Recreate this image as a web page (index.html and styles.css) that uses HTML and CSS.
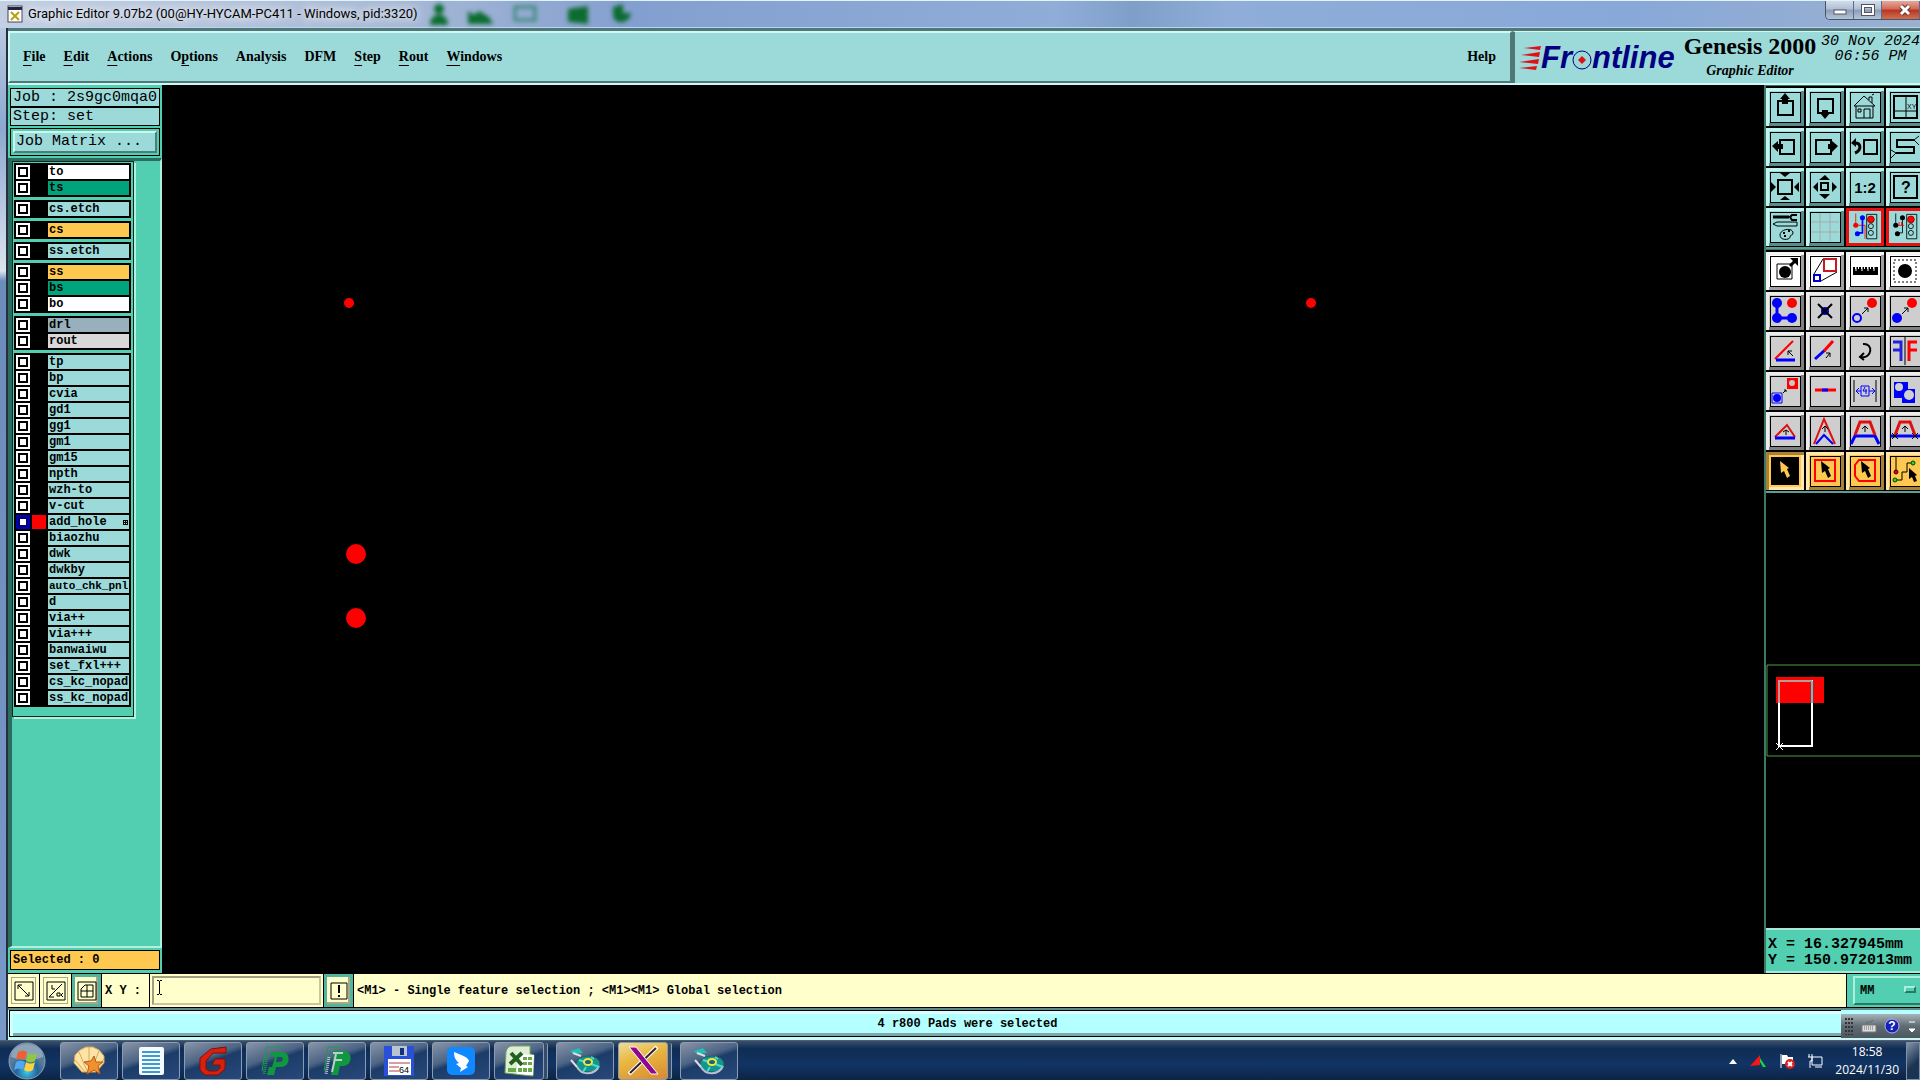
FILE: index.html
```
<!DOCTYPE html>
<html lang="en">
<head>
  <meta charset="UTF-8" />
  <meta name="viewport" content="width=device-width, initial-scale=1.0"/>
  <title>Graphic Editor 9.07b2</title>
  <link rel="stylesheet" href="styles.css">
</head>
<body>
  <!-- Title bar -->
  <div class="titlebar">
    <svg class="app-icon" width="16" height="18" viewBox="0 0 16 18"><rect x="1" y="1" width="14" height="16" fill="#fff" stroke="#445"/><path d="M1 2h14v3H1z" fill="#224"/><path d="M4 7l8 8M12 7l-8 8" stroke="#b8a010" stroke-width="2"/></svg>
    <span class="title">Graphic Editor 9.07b2 (00@HY-HYCAM-PC411 - Windows, pid:3320)</span>
    <svg class="glass" width="230" height="26" viewBox="0 0 230 26"><g fill="#0c6c30"><circle cx="18" cy="8" r="5"/><path d="M9 24c0-14 18-14 18 0zM47 10l6 4 5-4 10 6 4 7H47z"/><path d="M94 6h20v13H94z" fill="none" stroke="#3d8a78" stroke-width="3"/><path d="M147 8l20-3v18l-20-2z"/><path d="M192 6l10-3v9h8c-1 12-18 12-18 2z"/></g></svg>
    <div class="win-buttons">
      <button aria-label="Minimize"><svg width="14" height="12"><rect x="1" y="6" width="12" height="4" fill="#fff" stroke="#556"/></svg></button>
      <button aria-label="Maximize"><svg width="14" height="12"><path d="M2 2h10v8H2z" fill="none" stroke="#556" stroke-width="4"/><path d="M2 2h10v8H2z" fill="none" stroke="#fff" stroke-width="2"/></svg></button>
      <button class="close" aria-label="Close"><svg width="14" height="12"><path d="M3 2l8 8M11 2l-8 8" stroke="#633" stroke-width="5"/><path d="M3 2l8 8M11 2l-8 8" stroke="#fff" stroke-width="3"/></svg></button>
    </div>
  </div>

  <div class="window">
    <div class="edge"></div>
    <div class="main">
      <!-- Menu bar and product banner -->
      <header class="header">
        <nav class="menubar">
          <button><u>F</u>ile</button>
          <button><u>E</u>dit</button>
          <button><u>A</u>ctions</button>
          <button>O<u>p</u>tions</button>
          <button>Analysis</button>
          <button>DFM</button>
          <button><u>S</u>tep</button>
          <button><u>R</u>out</button>
          <button><u>W</u>indows</button>
          <button class="help">Help</button>
        </nav>
        <div class="banner">
          <div class="logo">
            <svg width="22" height="24" viewBox="0 0 22 24"><path d="M4 2L22 0l-1 4zM2 9l19-3-1 5zM0 16l20-3-1 5zM0 22l18-2-1 4z" fill="#e01018"/></svg>
            <span>Fr</span><svg width="20" height="24" viewBox="0 0 20 24"><circle cx="10" cy="14" r="9" fill="none" stroke="#000080" stroke-width="1"/><path d="M10 10l4 4-4 4-4-4z" fill="#e01018"/></svg><span>ntline</span>
          </div>
          <div class="product">
            <div class="product-name">Genesis 2000</div>
            <div class="product-part">Graphic Editor</div>
          </div>
          <div class="datetime"><div>30 Nov 2024</div><div>06:56 PM</div></div>
        </div>
      </header>

      <div class="workspace">
        <!-- Layers panel -->
        <aside class="sidebar">
          <div class="job">
            <div>Job : 2s9gc0mqa0</div>
            <div>Step: set</div>
          </div>
          <div class="matrix"><button>Job Matrix ...</button></div>
          <div class="layers-area">
            <div class="layers">
              <div class="group">
                <label><input type="checkbox"><i></i><span class="white">to</span></label>
                <label><input type="checkbox"><i></i><span class="mask">ts</span></label>
              </div>
              <div class="group">
                <label><input type="checkbox"><i></i><span>cs.etch</span></label>
              </div>
              <div class="group">
                <label><input type="checkbox"><i></i><span class="signal">cs</span></label>
              </div>
              <div class="group">
                <label><input type="checkbox"><i></i><span>ss.etch</span></label>
              </div>
              <div class="group">
                <label><input type="checkbox"><i></i><span class="signal">ss</span></label>
                <label><input type="checkbox"><i></i><span class="mask">bs</span></label>
                <label><input type="checkbox"><i></i><span class="white">bo</span></label>
              </div>
              <div class="group">
                <label><input type="checkbox"><i></i><span class="drill">drl</span></label>
                <label><input type="checkbox"><i></i><span class="rout">rout</span></label>
              </div>
              <div class="group">
                <label><input type="checkbox"><i></i><span>tp</span></label>
                <label><input type="checkbox"><i></i><span>bp</span></label>
                <label><input type="checkbox"><i></i><span>cvia</span></label>
                <label><input type="checkbox"><i></i><span>gd1</span></label>
                <label><input type="checkbox"><i></i><span>gg1</span></label>
                <label><input type="checkbox"><i></i><span>gm1</span></label>
                <label><input type="checkbox"><i></i><span>gm15</span></label>
                <label><input type="checkbox"><i></i><span>npth</span></label>
                <label><input type="checkbox"><i></i><span>wzh-to</span></label>
                <label><input type="checkbox"><i></i><span>v-cut</span></label>
                <label class="active"><input type="checkbox" checked><i></i><span>add_hole<svg width="5" height="5" viewBox="0 0 5 5"><path d="M0 .5h5M0 2.5h5M0 4.5h5M.5 0v5M2.5 0v5M4.5 0v5" stroke="#000"/></svg></span></label>
                <label><input type="checkbox"><i></i><span>biaozhu</span></label>
                <label><input type="checkbox"><i></i><span>dwk</span></label>
                <label><input type="checkbox"><i></i><span>dwkby</span></label>
                <label><input type="checkbox"><i></i><span class="long">auto_chk_pnl</span></label>
                <label><input type="checkbox"><i></i><span>d</span></label>
                <label><input type="checkbox"><i></i><span>via++</span></label>
                <label><input type="checkbox"><i></i><span>via+++</span></label>
                <label><input type="checkbox"><i></i><span>banwaiwu</span></label>
                <label><input type="checkbox"><i></i><span>set_fxl+++</span></label>
                <label><input type="checkbox"><i></i><span>cs_kc_nopad</span></label>
                <label><input type="checkbox"><i></i><span>ss_kc_nopad</span></label>
              </div>
            </div>
          </div>
          <div class="selected">Selected : 0</div>
        </aside>

        <!-- Drawing area -->
        <main class="canvas">
          <svg width="100%" height="100%">
            <g fill="#f00">
              <ellipse cx="187" cy="218" rx="5" ry="5"/>
              <ellipse cx="1149" cy="218" rx="5" ry="5"/>
              <circle cx="194" cy="469" r="10"/>
              <circle cx="194" cy="533" r="10"/>
            </g>
          </svg>
        </main>

        <!-- Tools -->
        <aside class="tools">
          <div class="toolgrid">
            <button aria-label="Pan up"><svg viewBox="0 0 38 38"><path class="f" d="M4 4h30v30H4z"/><path class="k2" d="M12 13h15v14H12z"/><path class="kf" d="M19 5l5 6h-2v5h-6v-5h-2z"/></svg></button>
            <button aria-label="Pan down"><svg viewBox="0 0 38 38"><path class="f" d="M4 4h30v30H4z"/><path class="k2" d="M12 11h15v14H12z"/><path class="kf" d="M19 31l5-6h-2v-3h-6v3h-2z"/></svg></button>
            <button aria-label="Home"><svg viewBox="0 0 38 38"><path class="f" d="M4 4h30v30H4z"/><path class="k" d="M8 18L18 8l11 10zM10 18v12h17V18M18 30v-9h6v9M12 21h3v3h-3zM23 12V9h3v6M26 7l2-1"/></svg></button>
            <button aria-label="Area zoom"><svg viewBox="0 0 38 38"><path class="f" d="M4 4h30v30H4z"/><path class="k2" d="M8 8h23v22H8z"/><path class="k" d="M20 8v22M8 23h23"/><text x="21" y="21" font-size="7">XY</text></svg></button>

            <button aria-label="Pan left"><svg viewBox="0 0 38 38"><path class="f" d="M4 4h30v30H4z"/><path class="k2" d="M14 12h14v14H14z"/><path class="kf" d="M6 18l6-5v3h5v5h-5v3z"/></svg></button>
            <button aria-label="Pan right"><svg viewBox="0 0 38 38"><path class="f" d="M4 4h30v30H4z"/><path class="k2" d="M10 12h15v14H10z"/><path class="kf" d="M32 18l-6-5v3h-4v5h4v3z"/></svg></button>
            <button aria-label="Previous zoom"><svg viewBox="0 0 38 38"><path class="f" d="M4 4h30v30H4z"/><path class="k2" d="M18 12h13v14H18z"/><path d="M9 15c6 0 7 7 0 10" fill="none" stroke="#000" stroke-width="3"/><path class="kf" d="M5 15l5-5v9z"/></svg></button>
            <button aria-label="Snake view"><svg viewBox="0 0 38 38"><path class="f" d="M4 4h30v30H4z"/><path class="k2" d="M28 12H11v7h17v6H10"/><path class="k" d="M28 12l5-4M28 12l5 5M10 25l-5-3M10 25l-5 5"/></svg></button>

            <button aria-label="Zoom in"><svg viewBox="0 0 38 38"><path class="f" d="M4 4h30v30H4z"/><path class="k2" d="M12 12h14v14H12z"/><path class="kf" d="M14 5h10l-5 4zM14 32h10l-5-4zM5 14v10l5-5zM33 14v10l-5-5z"/></svg></button>
            <button aria-label="Zoom out"><svg viewBox="0 0 38 38"><path class="f" d="M4 4h30v30H4z"/><path class="k2" d="M15 15h7v7h-7z"/><path class="kf" d="M13 12h11l-5-5zM13 26h11l-5 5zM12 14v10l-5-5zM26 14v10l5-5z"/></svg></button>
            <button aria-label="Scale one to two"><svg viewBox="0 0 38 38"><path class="f" d="M4 4h30v30H4z"/><text x="19" y="25" font-size="15" font-weight="bold" text-anchor="middle">1:2</text></svg></button>
            <button aria-label="Info"><svg viewBox="0 0 38 38"><path class="f" d="M4 4h30v30H4z"/><path class="k2" d="M8 8h23v22H8z"/><text x="20" y="25" font-size="16" font-weight="bold" text-anchor="middle">?</text></svg></button>

            <button aria-label="Settings"><svg viewBox="0 0 38 38"><path class="f" d="M4 4h30v30H4z"/><path d="M7 9h16" stroke="#000" stroke-width="3"/><path d="M31 7h-5l-2 2 2 3h5" fill="none" stroke="#000" stroke-width="2"/><path class="k" d="M7 16l4-2h20v4H11z"/><path class="k" d="M14 27c0-6 13-8 13-2 0 3-3 1-3 4s-10 4-10-2z"/><path d="M17 25h2M22 23h2M18 28h2" stroke="#000" stroke-width="2"/></svg></button>
            <button aria-label="Grid"><svg viewBox="0 0 38 38"><path class="f" d="M4 4h30v30H4z"/><path d="M14 5v28M24 5v28M5 14h28M5 24h28" stroke="#a8a8a8" fill="none"/></svg></button>
            <button class="alert" aria-label="Snap"><svg viewBox="0 0 38 38"><g id="lamp"><path class="k" d="M21 4h12v29H21z"/><circle cx="26" cy="10" r="4" fill="#f00" stroke="#800"/><circle class="k" cx="26" cy="18" r="3"/><circle class="k" cx="26" cy="26" r="3"/></g><path d="M8 3v14h11v16" fill="none" stroke="#f00"/><circle cx="8" cy="17" r="3" fill="#f00"/><path d="M16 9v17h-6" fill="none" stroke="#00f" stroke-width="2"/><circle cx="16" cy="8" r="3" fill="#00f"/><circle cx="10" cy="27" r="3" fill="#00f"/></svg></button>
            <button class="alert" aria-label="Measure net"><svg viewBox="0 0 38 38"><use href="#lamp"/><path class="k" d="M8 3v14M16 9v17h-6"/><path d="M10 17h8M12 13v4M15 13v4" stroke="#f00" fill="none"/><circle cx="8" cy="17" r="3"/><circle cx="16" cy="8" r="3"/><circle cx="10" cy="27" r="3"/></svg></button>
          </div>

          <div class="toolgrid">
            <button class="wh" aria-label="Move feature"><svg viewBox="0 0 38 38"><path class="f" d="M4 4h30v30H4z"/><path class="k" d="M11 12h15v15H11z"/><circle cx="19" cy="20" r="6"/><path d="M24 14l5-5" stroke="#000" stroke-width="3"/><path class="kf" d="M24 6h8v8z"/></svg></button>
            <button class="wh" aria-label="Resize feature"><svg viewBox="0 0 38 38"><path class="f" d="M4 4h30v30H4z"/><path d="M18 7h12v12H18z" fill="none" stroke="#c81820" stroke-width="2"/><path d="M8 23h6v6H8z" fill="none" stroke="#00c" stroke-width="2"/><path class="k" d="M8 22l9-15M15 29l16-9"/></svg></button>
            <button class="wh" aria-label="Ruler"><svg viewBox="0 0 38 38"><path class="f" d="M4 4h30v30H4z"/><path class="kf" d="M7 17h25v6H7z"/><path d="M8 17v-2M11 17v-2M14 17v-2M17 17v-2M20 17v-2M23 17v-2M26 17v-2M29 17v-2M31 17v-2" stroke="#000" stroke-width="2"/><path d="M10 15v4M16 15v4M22 15v4M28 15v4" stroke="#fff"/></svg></button>
            <button class="wh" aria-label="Select pad"><svg viewBox="0 0 38 38"><path class="f" d="M4 4h30v30H4z"/><path class="k" d="M8 8h22v22H8z" stroke-dasharray="2 2"/><circle cx="19" cy="19" r="7"/></svg></button>

            <button class="gr" aria-label="Connect"><svg viewBox="0 0 38 38"><path class="f" d="M4 4h30v30H4z"/><path d="M11 11v15h15" fill="none" stroke="#00f" stroke-width="3"/><g fill="#00f"><circle cx="11" cy="11" r="5"/><circle cx="11" cy="26" r="5"/><circle cx="26" cy="26" r="5"/></g><circle cx="26" cy="11" r="5" fill="#f00"/></svg></button>
            <button class="gr" aria-label="Delete"><svg viewBox="0 0 38 38"><path class="f" d="M4 4h30v30H4z"/><circle cx="19" cy="19" r="4" fill="#00c"/><path d="M12 12l14 14M26 12L12 26" stroke="#000" stroke-width="2"/></svg></button>
            <button class="gr" aria-label="Copy to"><svg viewBox="0 0 38 38"><path class="f" d="M4 4h30v30H4z"/><circle cx="11" cy="26" r="4" fill="none" stroke="#00f" stroke-width="2"/><circle cx="26" cy="11" r="5" fill="#f00"/><path class="k" d="M16 22l6-6M18 16h4v4"/></svg></button>
            <button class="gr" aria-label="Move to"><svg viewBox="0 0 38 38"><path class="f" d="M4 4h30v30H4z"/><circle cx="11" cy="26" r="5" fill="#00f"/><circle cx="26" cy="11" r="5" fill="#f00"/><path class="k" d="M16 22l6-6M18 16h4v4"/></svg></button>

            <button class="gr" aria-label="Rotate"><svg viewBox="0 0 38 38"><path class="f" d="M4 4h30v30H4z"/><path d="M9 27L27 9" stroke="#f00" stroke-width="2"/><path d="M10 28h19" stroke="#00f" stroke-width="3"/><path class="k" d="M27 24l-5-5M22 23v-4h4"/></svg></button>
            <button class="gr" aria-label="Stretch"><svg viewBox="0 0 38 38"><path class="f" d="M4 4h30v30H4z"/><path d="M9 27l10-9" stroke="#00f" stroke-width="3"/><path d="M18 19L27 9" stroke="#f00" stroke-width="3"/><path class="k" d="M20 26l4-5M20 21h4v4"/></svg></button>
            <button class="gr" aria-label="Arc"><svg viewBox="0 0 38 38"><path class="f" d="M4 4h30v30H4z"/><path d="M17 12c11-1 9 15-2 13M18 21l-4 4 4 3" fill="none" stroke="#000" stroke-width="2"/></svg></button>
            <button class="gr" aria-label="Mirror"><svg viewBox="0 0 38 38"><path class="f" d="M4 4h30v30H4z"/><path class="k" d="M19 5v28"/><path d="M7 10h8v19M7 18h8" fill="none" stroke="#22d" stroke-width="3"/><path d="M31 10h-8v19M31 18h-8" fill="none" stroke="#f00" stroke-width="3"/></svg></button>

            <button class="gr" aria-label="Substitute"><svg viewBox="0 0 38 38"><path class="f" d="M4 4h30v30H4z"/><path d="M21 6h11v11H21z" fill="#f00"/><circle cx="26" cy="11" r="3" fill="#c8c8c8"/><path d="M6 21h10v10H6z" fill="none" stroke="#00f"/><circle cx="11" cy="26" r="4" fill="#00f"/><path class="k" d="M17 21l3-3M18 18h2v2"/></svg></button>
            <button class="gr" aria-label="Break line"><svg viewBox="0 0 38 38"><path class="f" d="M4 4h30v30H4z"/><path d="M9 18h21" stroke="#f00" stroke-width="3"/><path d="M16 18h6" stroke="#00f" stroke-width="3"/></svg></button>
            <button class="gr" aria-label="Spacing"><svg viewBox="0 0 38 38"><path class="f" d="M4 4h30v30H4z"/><path class="k" d="M8 8v22M30 8v22"/><path d="M10 19h5M23 19h6M13 16l-3 3 3 3M26 16l3 3-3 3M15 14h8v10h-8zM19 15l-2 4h4M20 17v5" fill="none" stroke="#00f"/></svg></button>
            <button class="gr" aria-label="Merge"><svg viewBox="0 0 38 38"><path class="f" d="M4 4h30v30H4z"/><path d="M8 10h14v7h7v14H16v-5H8z" fill="#00f"/><circle cx="13" cy="15" r="4" fill="#d0d0d0"/><circle cx="23" cy="23" r="5" fill="#d0d0d0"/></svg></button>

            <button class="gr" aria-label="Extend line"><svg viewBox="0 0 38 38"><path class="f" d="M4 4h30v30H4z"/><path d="M9 25l12-12 8 12" fill="none" stroke="#e01010" stroke-width="2"/><path d="M9 26h20" stroke="#00f" stroke-width="3"/><path class="k" d="M20 23v-5M17 20l3-2 3 2"/></svg></button>
            <button class="gr" aria-label="Move corner"><svg viewBox="0 0 38 38"><path class="f" d="M4 4h30v30H4z"/><path d="M8 32L18 7l11 25" fill="none" stroke="#e01010" stroke-width="2"/><path d="M10 32l8-9 9 9" fill="none" stroke="#00f" stroke-width="2"/><path class="k" d="M19 20v-6M16 17l3-3 3 3"/></svg></button>
            <button class="gr" aria-label="Move segment"><svg viewBox="0 0 38 38"><path class="f" d="M4 4h30v30H4z"/><path d="M5 32l4-8h20l4 8" fill="none" stroke="#00f" stroke-width="3"/><path d="M9 23l5-13h10l5 13" fill="none" stroke="#e01010" stroke-width="3"/><path class="k" d="M19 20v-6M16 17l3-3 3 3"/></svg></button>
            <button class="gr" aria-label="Move between"><svg viewBox="0 0 38 38"><path class="f" d="M4 4h30v30H4z"/><path d="M5 24h29" stroke="#00f" stroke-width="3"/><path d="M9 23l5-13h10l5 13" fill="none" stroke="#e01010" stroke-width="3"/><path class="k" d="M19 20v-6M16 17l3-3 3 3M6 21l6 6M12 21l-6 6M26 21l6 6M32 21l-6 6"/></svg></button>

            <button class="or on" aria-label="Select single"><svg viewBox="0 0 38 38"><path d="M5 5h28v28H5z"/><path d="M14 9l9 7-2 1 3 7-3 2-3-7-3 2z" fill="#ffc850"/></svg></button>
            <button class="or" aria-label="Select rectangle"><svg viewBox="0 0 38 38"><path class="f" d="M4 4h30v30H4z"/><path d="M9 8h20v21H9z" fill="none" stroke="#f00" stroke-width="2"/><path class="kf" d="M15 9l9 7-2 1 3 7-3 2-3-7-3 2z"/></svg></button>
            <button class="or" aria-label="Select polygon"><svg viewBox="0 0 38 38"><path class="f" d="M4 4h30v30H4z"/><path d="M13 8h16v21H13l-4-5V13z" fill="none" stroke="#f00" stroke-width="2"/><path class="kf" d="M15 9l9 7-2 1 3 7-3 2-3-7-3 2z"/></svg></button>
            <button class="or" aria-label="Select net"><svg viewBox="0 0 38 38"><path class="f" d="M4 4h30v30H4z"/><path class="k" d="M10 5v15M9 28h7v-8h5v-9h6"/><circle cx="10" cy="20" r="2" fill="#d00" stroke="#400"/><circle cx="9" cy="28" r="2" fill="#2d2" stroke="#040"/><circle cx="27" cy="11" r="2" fill="#2d2" stroke="#040"/><path class="kf" d="M23 16l8 7-2 1 2 5-3 1-2-5-3 2z"/></svg></button>
          </div>

          <div class="minimap">
            <svg width="100%" height="93">
              <path d="M400 1H1v91h399" fill="none" stroke="#4c9c3c" stroke-width="1"/>
              <path d="M10 13h48v26H10z" fill="#f00"/>
              <path d="M13 17h33v65H13z" fill="none" stroke="#fff" stroke-width="2"/>
              <path d="M13 39V17h33" fill="none" stroke="#b89a9a" stroke-width="2"/>
              <path d="M46 17v22" stroke="#30d8e0" stroke-width="2"/>
              <path d="M10 79l7 7M17 79l-7 7" stroke="#fff"/>
            </svg>
          </div>
          <div class="coords"><div>X = 16.327945mm</div><div>Y = 150.972013mm</div></div>
        </aside>
      </div>

      <!-- Coordinate entry -->
      <div class="prompt">
        <button class="pbtn" aria-label="Absolute"><svg viewBox="0 0 20 20"><path class="k" d="M1 1h18v18H1zM4 4l11 11M4 8V4h4M15 11v4h-4"/></svg></button>
        <button class="pbtn" aria-label="Angle"><svg viewBox="0 0 20 20"><path class="k" d="M1 1h18v18H1zM3 16L16 3M3 16h5M6 4v4h3M11 12h3v3h-3zM17 12l-2 2 2 2"/></svg></button>
        <button class="pbtn framed" aria-label="Snap grid"><svg viewBox="0 0 20 20"><path class="k" d="M1 1h18v18H1zM4 8l4-4h8v12H4zM10 4v12M4 10h12"/></svg></button>
        <label for="xy">X Y :</label>
        <div class="entry">
          <input id="xy" type="text">
          <svg class="ibeam" width="7" height="15" viewBox="0 0 7 15"><path class="k" d="M1 .5h2M4 .5h2M3.500 1v13M1 14.500h2M4 14.500h2"/></svg>
        </div>
        <button class="pbtn framed" aria-label="Alert"><svg viewBox="0 0 20 20"><path class="k" d="M2 2h16v16H2z"/><path d="M10 4v8M10 14v2" stroke="#000" stroke-width="2"/></svg></button>
        <div class="message">&lt;M1&gt; - Single feature selection ; &lt;M1&gt;&lt;M1&gt; Global selection</div>
        <div class="units">
          <select aria-label="Units"><option>MM</option></select>
          <span class="knob"></span>
        </div>
      </div>

      <div class="status">
        <div class="status-text">4 r800 Pads were selected</div>
        <div class="langbar">
          <svg width="8" height="18"><path d="M1 1v18M4 1v18M7 1v18" stroke="#333" stroke-width="2" stroke-dasharray="2 2"/></svg>
          <svg width="16" height="16"><path d="M1 7h14v7H1z" fill="#ddd" stroke="#777"/><path d="M3 9h10M3 11h10" stroke="#666" stroke-dasharray="1 1"/><path d="M5 6c1-4 4 0 7-4" fill="none" stroke="#666"/></svg>
          <svg width="16" height="16"><circle cx="8" cy="8" r="7" fill="#1420b8" stroke="#aab8e8"/><text x="8" y="12" font-size="12" font-weight="bold" fill="#fff" text-anchor="middle">?</text></svg>
          <svg width="8" height="16"><path d="M1 4h6M1 11h6l-3 3z" fill="#fff" stroke="#fff"/></svg>
        </div>
      </div>
    </div>
  </div>

  <!-- Taskbar -->
  <footer class="taskbar">
    <button class="start" aria-label="Start">
      <svg width="38" height="38" viewBox="0 0 38 38"><defs><radialGradient id="orb" cy=".8"><stop offset="0" stop-color="#40c8e8"/><stop offset=".6" stop-color="#23639c"/><stop offset="1" stop-color="#5c7c98"/></radialGradient></defs><circle cx="19" cy="19" r="18" fill="url(#orb)" stroke="#8aa0b4"/><path d="M3 15a16 13 0 0 1 32 0c-10 4-22 4-32 0z" fill="#fff" opacity=".3"/><path d="M10 10c3-2 6-2 9 0l-2 8c-3-2-6-2-9 0z" fill="#f06030"/><path d="M20 11c3 2 6 2 9 0l-2 8c-3 2-6 2-9 0z" fill="#90c840"/><path d="M8 20c3-2 6-2 9 0l-2 8c-3-2-6-2-9 0z" fill="#50a8f0"/><path d="M18 20c3 2 6 2 9 0l-2 8c-3 2-6 2-9 0z" fill="#ffd040"/></svg>
    </button>
    <div class="tasks">
      <button class="task" aria-label="Shell"><svg viewBox="0 0 32 32"><path d="M9 27L1 18l1-8 5-5 6-3h7l6 3 5 6v7l-8 9z" fill="#fce4a8" stroke="#d8a850"/><path d="M12 27L2 15M14 26L6 7M16 26V2M18 26l8-20M20 26l11-12" stroke="#dca850"/><path d="M21 11l2 6 7 0-5 4 2 8-6-4-7 4 2-8-5-4 7-1z" fill="#f09030" stroke="#b85c10"/></svg></button>
      <button class="task" aria-label="Notepad"><svg viewBox="0 0 32 32"><rect x="4" y="2" width="25" height="28" rx="2" fill="#f4faff"/><path d="M7 7h18M7 11h18M7 15h18M7 19h18M7 23h18M7 27h18" stroke="#3c9ccc" stroke-width="2"/></svg></button>
      <button class="task" aria-label="G"><svg viewBox="0 0 32 32"><path d="M29 2v6H16l-7 8v8l3 2h8l3-3v-3h-8l3-6h10v10l-7 6H8l-5-5V13L14 4z" fill="#d82010" stroke="#801008"/></svg></button>
      <button class="task" aria-label="P editor"><svg viewBox="0 0 32 32"><path d="M3 26L7 2h18" fill="none" stroke="#18a048" stroke-width="1"/><path d="M12 7h11c9 0 9 15-1 15h-5l-2 8H8l2-8h3l3-10-5-1z" fill="#109840"/><path d="M18 12h4c3 0 2 5-1 5h-4z" fill="#27476c"/><path d="M8 12l-3 17" stroke="#18a048" stroke-dasharray="1 1" stroke-width="3"/></svg></button>
      <button class="task" aria-label="PF editor"><svg viewBox="0 0 32 32"><path d="M3 26L7 2h14" fill="none" stroke="#18a048" stroke-width="1"/><path d="M12 6h11c9 0 9 15-1 15h-3l-2 9h-7l2-9z" fill="#109840"/><path d="M12 8h10M14 15h7M15 9l-4 18" fill="none" stroke="#b8d0c8" stroke-width="2"/><path d="M8 12l-3 17" stroke="#b8d0c8" stroke-dasharray="1 1" stroke-width="3"/></svg></button>
      <button class="task" aria-label="Save"><svg viewBox="0 0 32 32"><path d="M1 1h30v30H1z" fill="#2850d8"/><path d="M9 1h15v10H9z" fill="#b8c4d0"/><path d="M17 3h4v7h-4z" fill="#103080"/><path d="M5 14h23v16H5z" fill="#fff"/><path d="M6 18h21M6 22h10M6 26h10" stroke="#b04048"/><text x="16" y="28" font-size="9">64</text></svg></button>
      <button class="task" aria-label="Messenger"><svg viewBox="0 0 32 32"><rect x="2" y="2" width="28" height="28" rx="5" fill="#1088ff"/><path d="M9 7c9 4 14 5 15 9l-3 5 2 1-8 5 1-4-5-4 3-1c-4-3-5-7-5-11z" fill="#fff"/></svg></button>
      <button class="task narrow stacked" aria-label="Spreadsheet"><svg viewBox="0 0 32 32"><path d="M2 28L3 7c1-4 3-6 7-6h17v8l4 1-1 21z" fill="#e0ecd4" stroke="#78a858"/><path d="M14 9l17 1-1 20-16-1z" fill="#fff"/><path d="M20 12h4v3h-4zM25 12h4v3h-4zM20 17h4v3h-4zM25 17h4v3h-4zM15 23h4v4h-4zM20 23h4v4h-4zM25 23h4v4h-4zM5 23h8v4H5z" fill="#68a848"/><path d="M8 8l11 12M19 8L7 19" stroke="#206020" stroke-width="4"/></svg></button>
      <button class="task" aria-label="Genesis"><svg viewBox="0 0 32 32"><g id="disk"><ellipse cx="19" cy="19" rx="12" ry="8" fill="#109890" stroke="#305868"/><path d="M8 22c5 9 18 8 22-1" fill="none" stroke="#b8c0d0" stroke-width="2"/><path d="M10 15l6 2M22 19l8 3M17 22l-3 5M22 12l3 2" stroke="#50d8c8" stroke-width="2"/><ellipse cx="19" cy="17" rx="4" ry="3" fill="#186878" stroke="#f0e840" stroke-width="2"/><path d="M1 6l9-3 4 5-10 1z" fill="#20c0b8"/><path d="M4 8l8 3M2 15l6 7" stroke="#ddd" stroke-width="2"/></g></svg></button>
      <button class="task narrow current stacked" aria-label="X server"><svg viewBox="0 0 32 32"><path d="M30 2L2 29" stroke="#fff" stroke-width="4"/><path d="M29 3L3 28" stroke="#302030" stroke-width="2"/><path d="M2 2h7l22 27h-7z" fill="#900890" stroke="#fff"/></svg></button>
      <button class="task" aria-label="Genesis tools"><svg viewBox="0 0 32 32"><use href="#disk"/></svg></button>
    </div>
    <div class="tray">
      <svg width="8" height="5"><path d="M0 5l4-5 4 5z" fill="#fff"/></svg>
      <svg width="18" height="14"><path d="M1 12L11 1v10z" fill="#f01818"/><path d="M11 4l6 9h-3l-3-5z" fill="#18d840"/></svg>
      <svg width="16" height="16"><path d="M2 1v14" stroke="#fff"/><path d="M3 2h5l1 2h5v7H3z" fill="#fff"/><circle cx="11" cy="11" r="5" fill="#d82020"/><path d="M9 9l4 4M13 9l-4 4" stroke="#fff" stroke-width="2"/></svg>
      <svg width="16" height="16"><path d="M5 4h10v8H5zM8 14h7M2 1v3M5 1v3M1 4h4v4H3v7" fill="none" stroke="#fff" stroke-width="1"/></svg>
      <div class="clock"><div>18:58</div><div>2024/11/30</div></div>
    </div>
    <button class="desktop" aria-label="Show desktop"></button>
  </footer>
</body>
</html>
```
FILE: styles.css
```
* { box-sizing: border-box; margin: 0; padding: 0; }

body {
  height: 100vh;
  display: flex;
  flex-direction: column;
  overflow: hidden;
  background: #000;
  color: #000;
  font-family: "Liberation Mono", monospace;
  font-size: 12px;
}

button, input, select {
  font: inherit;
  color: inherit;
  border: none;
  background: none;
  border-radius: 0;
}

svg { display: block; flex-shrink: 0; }
svg text { font-family: "Liberation Sans", sans-serif; }

/* icon strokes */
.f, .k { fill: none; stroke: #000; stroke-width: 1; }
.k2 { fill: none; stroke: #000; stroke-width: 2; }
.kf { fill: #000; }
.f, .k2 { shape-rendering: crispEdges; }

/* Title bar */
.titlebar {
  height: 28px;
  flex-shrink: 0;
  display: flex;
  align-items: center;
  padding-left: 7px;
  border-top: 1px solid #dff4fc;
  border-bottom: 1px solid #b8d4f0;
  background: linear-gradient(to right, #c4cfe2, #a9bad6 20%, #839fcf 33%, #90add8 55%, #7f9fc8 59%, #8fadd8 64%, #88a8d8 85%, #9ab0d0);
}

.title {
  margin-left: 5px;
  font: 13px/20px Roboto, sans-serif;
  white-space: nowrap;
  text-shadow: 0 0 8px #fff, 0 0 12px #fff;
}

.glass { margin-left: 3px; filter: blur(2px); }

.win-buttons {
  align-self: flex-start;
  display: flex;
  height: 19px;
  margin-left: auto;
  border: 1px solid #485468;
  border-top: none;
  border-right: none;
  border-radius: 0 0 0 5px;
  overflow: hidden;
}

.win-buttons button {
  width: 28px;
  display: flex;
  align-items: center;
  justify-content: center;
  border-right: 1px solid #5c6c88;
  background: linear-gradient(#d4dce8, #b0bed4 45%, #8c9cb8 50%, #b4c4d8);
}

.win-buttons .close {
  width: 38px;
  padding-left: 8px;
  background: linear-gradient(#e8a898, #d06858 45%, #b83420 50%, #d07050);
}

/* Window */
.window { flex: 1; min-height: 0; display: flex; }

.edge {
  width: 8px;
  flex-shrink: 0;
  border-right: 2px solid #26303c;
  background: linear-gradient(#b8c8e0, #8ca8d0 10%, #dce4ee 24%, #6c8cbc 25%, #7898c8);
}

.main { flex: 1; min-width: 0; display: flex; flex-direction: column; }

/* Header */
.header {
  height: 57px;
  flex-shrink: 0;
  display: flex;
  background: #9cdada;
  border-top: 3px solid #507878;
  border-bottom: 2px solid #d0f8f4;
}

.menubar {
  flex: 1;
  display: flex;
  align-items: center;
  gap: 18px;
  padding: 0 14px 0 13px;
  border: 2px solid #d0f8f4;
  border-right-color: #507878;
  border-bottom-color: #507878;
}

.menubar button { font: bold 14px/20px "Liberation Serif", serif; }
.menubar u { text-underline-offset: 4px; }
.menubar .help { margin-left: auto; }

.banner {
  width: 408px;
  display: flex;
  overflow: hidden;
  padding-left: 4px;
  border-left: 3px solid #507878;
  border-top: 1px solid #d0f8f4;
}

.logo {
  display: flex;
  align-items: center;
  width: 160px;
  flex-shrink: 0;
  color: #000080;
  font: italic bold 31px/40px "Liberation Sans", sans-serif;
}

.product { width: 142px; flex-shrink: 0; text-align: center; }
.product-name { font: bold 24px/28px "Liberation Serif", serif; white-space: nowrap; }
.product-part { font: italic bold 14px/22px "Liberation Serif", serif; }

.datetime {
  padding-top: 2px;
  flex-shrink: 0;
  font: italic 15px/15px "Liberation Mono", monospace;
  text-align: center;
  white-space: nowrap;
}

/* Workspace */
.workspace { flex: 1; min-height: 0; display: flex; }

.sidebar {
  width: 154px;
  flex-shrink: 0;
  display: flex;
  flex-direction: column;
  background: #52cfb0;
}

.job {
  margin: 3px 2px 2px;
  border: 1px solid #000;
  background: #9cdada;
  font-size: 15px;
  line-height: 17px;
}

.job div { padding-left: 2px; white-space: nowrap; overflow: hidden; }
.job div + div { border-top: 2px solid #000; }

.matrix {
  margin: 0 2px;
  padding: 2px;
  border: 1px solid #000;
}

.matrix button {
  display: block;
  width: 100%;
  height: 22px;
  padding-left: 1px;
  text-align: left;
  font-size: 15px;
  line-height: 18px;
  background: #9cdada;
  border: 2px solid;
  border-color: #c8f8f0 #488080 #488080 #c8f8f0;
}

.layers-area {
  flex: 1;
  margin-top: 2px;
  border: 2px solid;
  border-width: 3px 2px 2px 4px;
  border-color: #2c6c60 #b0f0dc #b0f0dc #2c6c60;
}

.layers {
  width: 122px;
  display: flex;
  flex-direction: column;
  gap: 3px;
  padding: 1px 2px 9px 1px;
  border: 1px solid #102820;
  box-shadow: 2px 2px 0 #b0f0dc;
}

.group {
  display: flex;
  flex-direction: column;
  gap: 2px;
  padding: 2px;
  background: #000;
}

.group label {
  display: flex;
  gap: 2px;
  height: 14px;
}

.group input {
  appearance: none;
  width: 14px;
  height: 14px;
  flex-shrink: 0;
  background: #fff;
  border: 2px solid #fff;
  box-shadow: inset 0 0 0 2px #000;
}

.group i { width: 14px; flex-shrink: 0; background: #000; }

.group span {
  flex: 1;
  min-width: 0;
  display: flex;
  align-items: center;
  justify-content: space-between;
  overflow: hidden;
  padding: 0 1px;
  background: #9cdada;
  font-weight: bold;
  line-height: 14px;
}

.group .white { background: #fff; }
.group .mask { background: #00a47c; }
.group .signal { background: #ffc850; }
.group .drill { background: #98b0bc; }
.group .rout { background: #d8d8d8; }
.group .long { font-size: 11px; }
.group .active i { background: #f00; }
.group .active input { border-color: #0000b8; box-shadow: inset 0 0 0 2px #000070; }

.selected {
  height: 20px;
  margin: 2px 2px 3px;
  padding-left: 2px;
  border: 1px solid #000;
  background: #ffc850;
  font-weight: bold;
  line-height: 18px;
}

.canvas { flex: 1; min-width: 0; background: #000; }

/* Tools */
.tools {
  width: 156px;
  flex-shrink: 0;
  display: flex;
  flex-direction: column;
  overflow: hidden;
  background: #000;
  border-left: 2px solid #3c7868;
}

.toolgrid {
  display: grid;
  grid-template-columns: repeat(4, 38px);
  gap: 2px;
  padding-top: 2px;
  padding-bottom: 1px;
  border-top: 1px solid #3c7868;
  border-bottom: 2px solid #609c90;
}

.toolgrid button {
  width: 38px;
  height: 38px;
  background: #9cdada;
  box-shadow: inset 3px 3px 0 #c4f4f0, inset -3px -3px 0 #588c8c;
}

.toolgrid .wh { background: #fff; box-shadow: inset 3px 3px 0 #f4f4f4, inset -3px -3px 0 #a0a0a0; }
.toolgrid .gr { background: #cecece; box-shadow: inset 3px 3px 0 #ececec, inset -3px -3px 0 #808080; }
.toolgrid .or { background: #ffc850; box-shadow: inset 3px 3px 0 #ffe8b0, inset -3px -3px 0 #a88038; }
.toolgrid .on { box-shadow: inset 3px 3px 0 #a88038, inset -3px -3px 0 #ffe8b0; }
.toolgrid .alert { border: 3px solid #e81010; box-shadow: none; }

.minimap {
  flex: 1;
  display: flex;
  align-items: center;
}

.coords {
  padding: 7px 0 2px 2px;
  border-top: 2px solid #a8e8d8;
  border-bottom: 2px solid #a8e8d8;
  background: #52cfb0;
  font-size: 15px;
  font-weight: bold;
  line-height: 16px;
  white-space: nowrap;
}

/* Coordinate entry */
.prompt {
  height: 35px;
  flex-shrink: 0;
  display: flex;
  gap: 1px;
  padding: 1px 0;
  background: #000;
  font-weight: bold;
}

.pbtn {
  width: 31px;
  padding: 2px;
  display: flex;
  align-items: center;
  justify-content: center;
  background: #ffffcc;
  box-shadow: inset 0 0 0 3px #ffffcc, inset 0 0 0 4px #a8a888;
}

.pbtn svg { width: 20px; height: 20px; }

.pbtn.framed {
  width: 29px;
  border: 3px solid #52b49c;
  box-shadow: inset -2px -2px 0 #a8a888;
}

.prompt label {
  width: 47px;
  padding-left: 3px;
  line-height: 34px;
  background: #ffffcc;
}

.entry { position: relative; display: flex; padding: 0 1px; background: #ffffcc; }

.entry input {
  width: 169px;
  margin: 2px 1px;
  padding-left: 4px;
  background: #ffffcc;
  border: 2px solid;
  border-color: #a0a080 #c8c8a0 #c8c8a0 #a0a080;
}

.ibeam { position: absolute; left: 6px; top: 6px; }

.message {
  flex: 1;
  padding-left: 3px;
  line-height: 34px;
  background: #ffffcc;
}

.units {
  position: relative;
  width: 73px;
  padding: 2px 0 2px 6px;
  background: #52cfb0;
}

.units select {
  appearance: none;
  width: 100%;
  height: 29px;
  padding-left: 5px;
  border: 2px solid;
  border-color: #a8f0dc transparent #2c7864 #a8f0dc;
  border-right: none;
}

.knob {
  position: absolute;
  right: 4px;
  top: 12px;
  width: 12px;
  height: 7px;
  border: 2px solid;
  border-color: #a8f0dc #2c7864 #2c7864 #a8f0dc;
}

/* Status line */
.status {
  height: 32px;
  flex-shrink: 0;
  display: flex;
  border-top: 2px solid #608888;
  border-bottom: 2px solid #d0f4f4;
  background: #b4ffff;
}

.status-text {
  flex: 1;
  margin: 0 0 1px 1px;
  border: 1px solid #000;
  border-right: none;
  box-shadow: inset 3px 3px 0 #d8ffff, inset 0 -3px 0 #80a8a8;
  text-align: center;
  text-indent: 84px;
  font-weight: bold;
  line-height: 26px;
}

.langbar {
  width: 79px;
  margin-top: 4px;
  display: flex;
  align-items: center;
  justify-content: space-between;
  padding: 0 4px;
  background: linear-gradient(#a8b4b8, #606c74 50%, #4c5860);
}

/* Taskbar */
.taskbar {
  height: 40px;
  flex-shrink: 0;
  display: flex;
  padding-top: 1px;
  border-top: 1px solid #506070;
  background: linear-gradient(#38506c, #0f2c54 20%, #123464 60%, #0c2444);
}

.start { width: 52px; margin-right: 8px; }
.start svg { margin-left: 8px; }

.tasks { display: flex; gap: 4px; }

.task {
  width: 58px;
  height: 38px;
  display: flex;
  align-items: center;
  justify-content: center;
  border: 1px solid #8c9cb0;
  border-radius: 3px;
  background: linear-gradient(160deg, #8894a8, #4c6484 40%, #1c3c68 50%, #28487c);
}

.task svg { width: 32px; height: 32px; }
.task.narrow { width: 50px; }
.task.stacked { margin-right: 8px; box-shadow: 4px 0 0 -1px #344c6c, 5px 0 0 -1px #8c9cb0; }
.task.current { background: linear-gradient(160deg, #f0dc98, #e8b840 40%, #d88830); }

.tray {
  margin-left: auto;
  display: flex;
  align-items: center;
  gap: 12px;
}

.clock {
  padding-right: 7px;
  color: #fff;
  font: 12px/18px "Open Sans", sans-serif;
  text-align: center;
}

.desktop {
  width: 14px;
  border: 1px solid #8090a4;
  background: linear-gradient(135deg, #8494a8, #1c3454 60%);
}
```
